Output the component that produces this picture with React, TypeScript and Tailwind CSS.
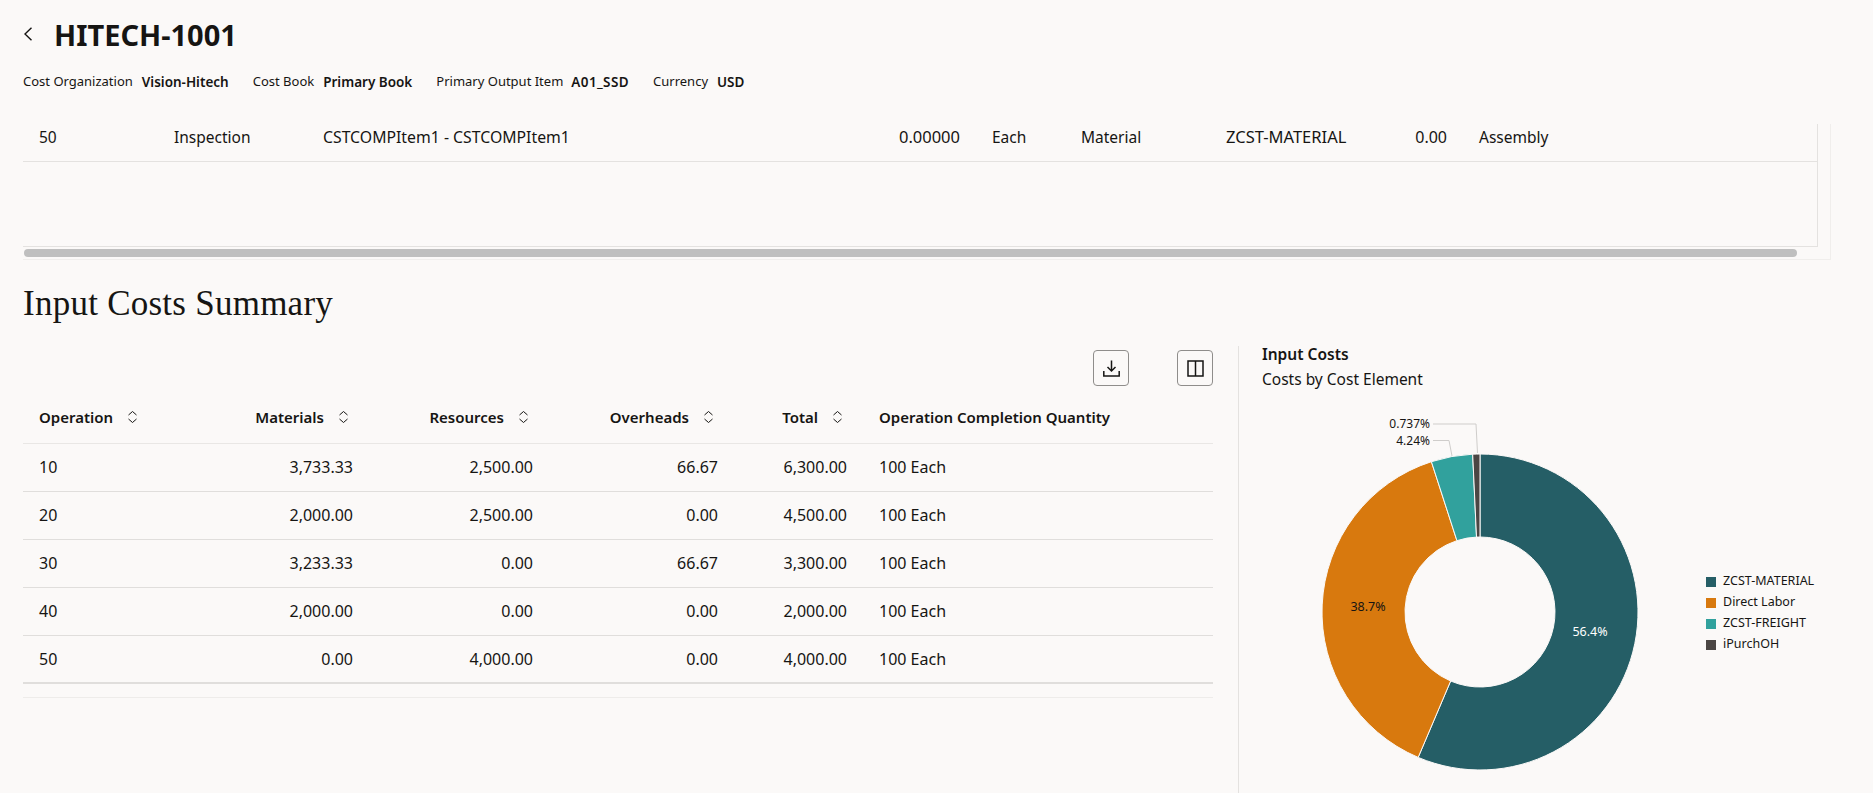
const summaryRows = [
  ['10', '3,733.33', '2,500.00', '66.67', '6,300.00', '100 Each'],
  ['20', '2,000.00', '2,500.00', '0.00', '4,500.00', '100 Each'],
  ['30', '3,233.33', '0.00', '66.67', '3,300.00', '100 Each'],
  ['40', '2,000.00', '0.00', '0.00', '2,000.00', '100 Each'],
  ['50', '0.00', '4,000.00', '0.00', '4,000.00', '100 Each'],
];

const slices = [
  { name: 'ZCST-MATERIAL', value: 56.4, color: '#255e66' },
  { name: 'Direct Labor', value: 38.623, color: '#d8790e' },
  { name: 'ZCST-FREIGHT', value: 4.24, color: '#31a19d' },
  { name: 'iPurchOH', value: 0.737, color: '#4b4644' },
];

function polar(r: number, pct: number) {
  const a = (pct / 100) * Math.PI * 2;
  return [1480 + r * Math.sin(a), 612 - r * Math.cos(a)];
}

function slicePath(from: number, to: number) {
  const R = 158;
  const r = 75;
  const large = to - from > 50 ? 1 : 0;
  const [x1, y1] = polar(R, from);
  const [x2, y2] = polar(R, to);
  const [x3, y3] = polar(r, to);
  const [x4, y4] = polar(r, from);
  return `M${x1} ${y1}A${R} ${R} 0 ${large} 1 ${x2} ${y2}L${x3} ${y3}A${r} ${r} 0 ${large} 0 ${x4} ${y4}Z`;
}

function SortIcon() {
  return (
    <svg width="11" height="14" viewBox="0 0 11 14" fill="none" stroke="#161513" strokeWidth="1" className="shrink-0">
      <path d="M1.5 5 5.5 1.5 9.5 5M1.5 9 5.5 12.5 9.5 9" />
    </svg>
  );
}

function Donut() {
  let start = 0;
  const paths = slices.map((s) => {
    const d = slicePath(start, start + s.value);
    start += s.value;
    return <path key={s.name} d={d} fill={s.color} stroke="#fbf9f8" strokeWidth="1" />;
  });
  return (
    <svg width="461" height="393" viewBox="1239 400 461 393" className="shrink-0 font-['Noto_Sans',sans-serif]">
      {paths}
      <path d="M1433 424H1476L1477.5 453M1433 440.500H1449L1452 456" fill="none" stroke="#cfcdcb" strokeWidth="1" />
      <text x="1430" y="428" textAnchor="end" fontSize="12" fill="#161513">0.737%</text>
      <text x="1430" y="445" textAnchor="end" fontSize="12" fill="#161513">4.24%</text>
      <text x="1368" y="611" textAnchor="middle" fontSize="12.500" fill="#161513">38.7%</text>
      <text x="1590" y="636" textAnchor="middle" fontSize="12.500" fill="#ffffff">56.4%</text>
    </svg>
  );
}

export default function App() {
  return (
    <div className="h-[793px] overflow-hidden bg-[#fbf9f8] text-[#161513] font-['Noto_Sans',sans-serif]">
      <div className="flex h-[68px] items-center pl-6">
        <svg width="8" height="14" viewBox="0 0 8 14" fill="none" stroke="#161513" strokeWidth="1.4">
          <path d="M7.500 0.700 1 7 7.500 13.300" />
        </svg>
        <h1 className="ml-[22px] text-[29px] font-bold leading-none">HITECH-1001</h1>
      </div>

      <div className="flex h-7 items-center gap-6 pl-[23px] text-[13px] [&_b]:text-[13.5px] [&_b]:font-semibold">
        <div className="flex items-center gap-[9px]"><span>Cost Organization</span><b>Vision-Hitech</b></div>
        <div className="flex items-center gap-[9px]"><span>Cost Book</span><b>Primary Book</b></div>
        <div className="flex items-center gap-2"><span>Primary Output Item</span><b className="tracking-[0.4px]">A01_SSD</b></div>
        <div className="flex items-center gap-[9px]"><span>Currency</span><b>USD</b></div>
      </div>

      {/* Scrolled table, only the last row is in view */}
      <div className="ml-[23px] mt-7 h-[136px] w-[1808px] border-r border-b border-[#f0eeec]">
        <div className="h-[123px] w-[1795px] border-r border-b border-[#e4e2e0]">
          <div className="grid h-[38px] grid-cols-[135px_149px_573px_96px_89px_145px_145px_108px_1fr] whitespace-nowrap border-b border-[#e4e2e0] pb-[12px] text-[15.500px] leading-[26px] [&>div]:px-4">
            <div>50</div>
            <div>Inspection</div>
            <div className="text-[15.800px]">CSTCOMPItem1 - CSTCOMPItem1</div>
            <div className="text-right text-[16.500px]">0.00000</div>
            <div>Each</div>
            <div>Material</div>
            <div className="text-[16.500px]">ZCST-MATERIAL</div>
            <div className="text-right text-[16px]">0.00</div>
            <div>Assembly</div>
          </div>
        </div>
        <div className="ml-px mt-[2px] h-2 w-[1773px] rounded-full bg-[#bfbfbf]" />
      </div>

      <h2 className="flex h-[86px] items-center pl-[23px] font-['Liberation_Serif',serif] text-[35px] leading-none tracking-[0.25px]">Input Costs Summary</h2>

      <div className="flex h-[447px] gap-[25px] pl-[23px]">
        <div className="w-[1190px] pt-1">
          <div className="flex justify-end gap-12">
            <button className="flex h-9 w-9 items-center justify-center rounded-[4px] border border-[#8f8d8b]">
              <svg width="17" height="17" viewBox="0 0 17 17" fill="none" stroke="#161513" strokeWidth="1.500">
                <path d="M8.500 0.500V11M4.500 7 8.500 11 12.500 7M0.800 11V16H16.200V11" />
              </svg>
            </button>
            <button className="flex h-9 w-9 items-center justify-center rounded-[4px] border border-[#8f8d8b]">
              <svg width="17" height="17" viewBox="0 0 17 17" fill="none" stroke="#161513" strokeWidth="1.500">
                <path d="M1 1H16V16H1ZM8.500 1V16" />
              </svg>
            </button>
          </div>

          <table className="w-full table-fixed border-collapse text-[16px]">
            <colgroup>
              <col className="w-[177px]" />
              <col className="w-[169px]" />
              <col className="w-[180px]" />
              <col className="w-[185px]" />
              <col className="w-[129px]" />
              <col />
            </colgroup>
            <thead>
              <tr className="h-[57px] border-b border-[#e9e7e5] text-[15px]">
                <th className="px-4 pt-[5px] font-semibold"><div className="flex items-center gap-[14px]">Operation <SortIcon /></div></th>
                {['Materials', 'Resources', 'Overheads', 'Total'].map((h) => (
                  <th key={h} className="pl-2 pr-5 pt-[5px] font-semibold">
                    <div className="flex items-center justify-end gap-[14px]">{h} <SortIcon /></div>
                  </th>
                ))}
                <th className="px-4 pt-[5px] text-left font-semibold">Operation Completion Quantity</th>
              </tr>
            </thead>
            <tbody>
              {summaryRows.map((r) => (
                <tr key={r[0]} className="h-12 border-b border-[#e0dedc] last:border-b-2">
                  <td className="px-4">{r[0]}</td>
                  <td className="px-4 text-right">{r[1]}</td>
                  <td className="px-4 text-right">{r[2]}</td>
                  <td className="px-4 text-right">{r[3]}</td>
                  <td className="px-4 text-right">{r[4]}</td>
                  <td className="px-4">{r[5]}</td>
                </tr>
              ))}
            </tbody>
          </table>
          <div className="h-[14px] border-b border-[#eeecea]" />
        </div>

        <div className="flex-1 border-l border-[#e4e2e0]">
          <div className="h-[54px] pl-[23px]">
            <div className="text-[15.500px] font-semibold leading-[16px]">Input Costs</div>
            <div className="mt-[6px] text-[15.500px] leading-[22px]">Costs by Cost Element</div>
          </div>
          <div className="flex">
            <Donut />
            <div className="pl-[6px] pt-[171px] text-[12.500px]">
              {slices.map((s) => (
                <div key={s.name} className="flex h-[21px] items-center gap-[7px]">
                  <span className="h-2.5 w-2.5" style={{ backgroundColor: s.color }} />
                  {s.name}
                </div>
              ))}
            </div>
          </div>
        </div>
      </div>
    </div>
  );
}
